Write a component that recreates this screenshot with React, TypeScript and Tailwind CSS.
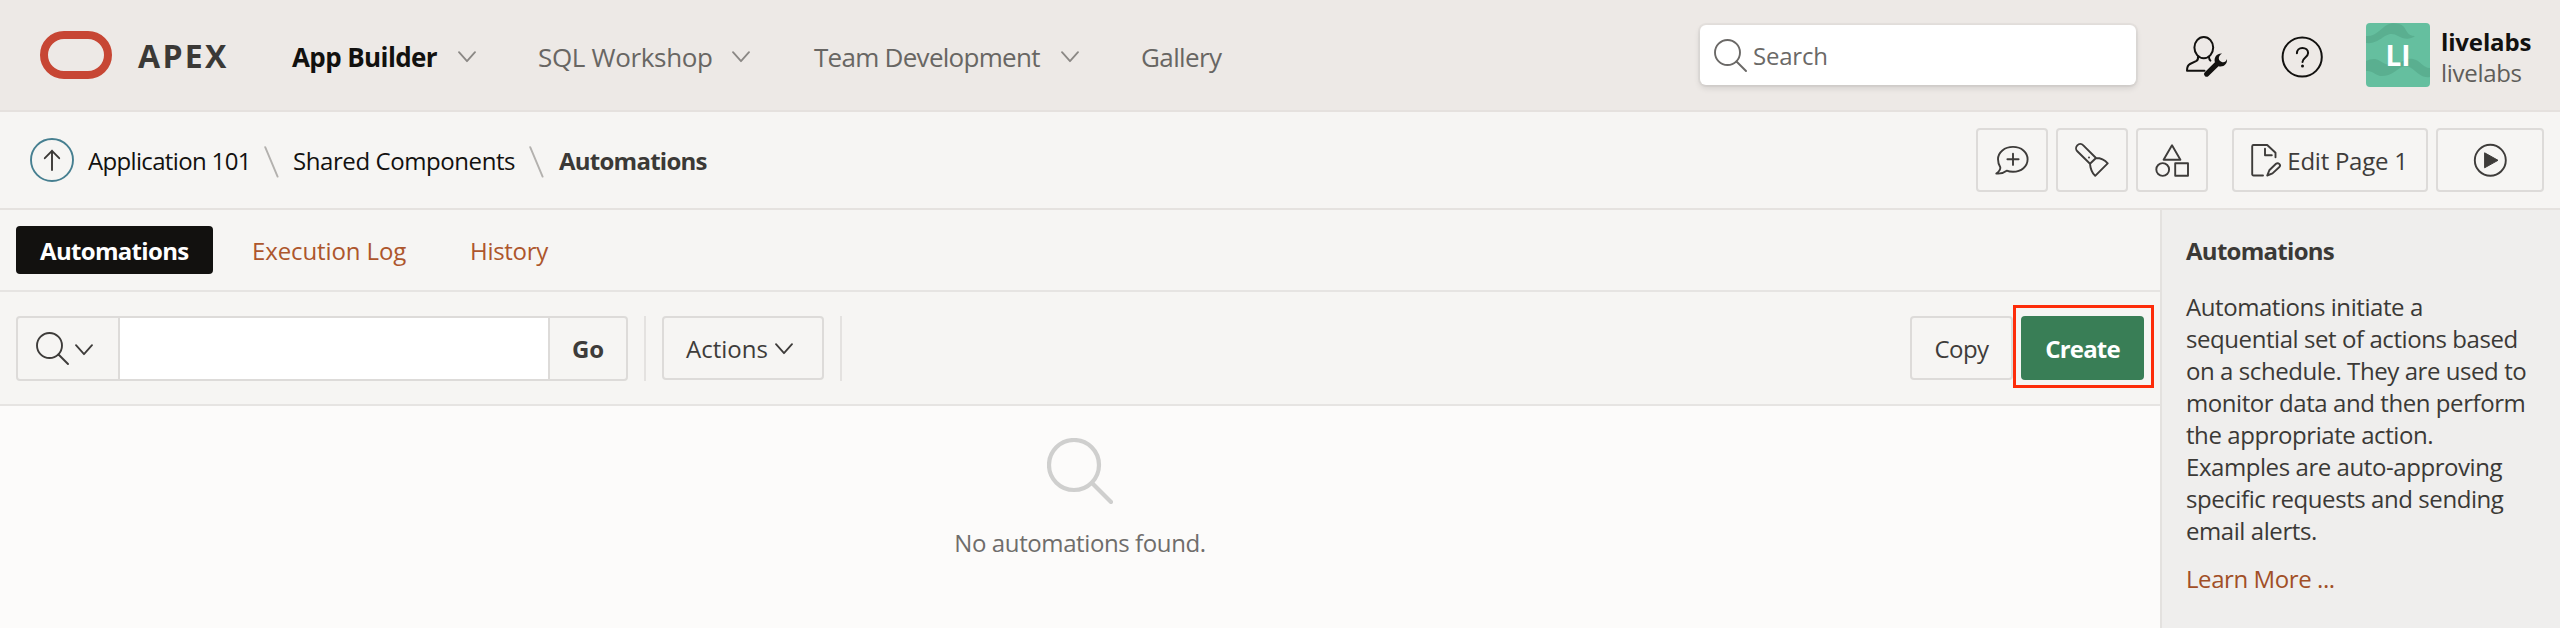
import type { ReactNode } from "react";

function Chevron({ className = "" }: { className?: string }) {
  return (
    <svg width="18" height="12" viewBox="0 0 18 12" fill="none" stroke="currentColor" className={`shrink-0 ${className}`}>
      <path d="M1 1.2 9 10.2l8-9" strokeWidth="1.8" strokeLinecap="round" strokeLinejoin="round" />
    </svg>
  );
}

function Magnifier({ className = "", stroke = 1.9 }: { className?: string; stroke?: number }) {
  return (
    <svg viewBox="0 0 33 33" fill="none" stroke="currentColor" strokeWidth={stroke} strokeLinecap="round" className={`shrink-0 ${className}`}>
      <circle cx="13.5" cy="13.5" r="12.5" />
      <path d="M22.5 22.5 32 32" />
    </svg>
  );
}

function IconButton({ children, className = "" }: { children: ReactNode; className?: string }) {
  return (
    <button className={`flex h-16 items-center justify-center rounded border-2 border-[#dddbd9] text-[#3e3c3a] ${className}`}>
      {children}
    </button>
  );
}

function Header() {
  return (
    <header className="flex h-28 items-center border-b-2 border-[#e5e1de] bg-[#ede9e6] pl-10">
      <div className="h-12 w-[72px] rounded-full border-8 border-[#c74634]" />
      <div className="ml-[26px] w-[154px] pt-px text-[32px] font-bold tracking-[2.3px] text-[#3b3936]">APEX</div>
      <nav className="flex items-center pt-1 text-[26px] whitespace-nowrap text-[#686663]">
        <a className="w-[166px] font-bold tracking-[-0.6px] text-[#12110f]">App Builder</a>
        <Chevron className="text-[#8b8885]" />
        <a className="ml-[62px] w-[194px] tracking-[-0.33px]">SQL Workshop</a>
        <Chevron className="text-[#8b8885]" />
        <a className="ml-16 w-[247px] tracking-[-0.72px]">Team Development</a>
        <Chevron className="text-[#8b8885]" />
        <a className="ml-[62px] tracking-[-0.6px]">Gallery</a>
      </nav>
      <div className="ml-auto flex h-[60px] w-[436px] items-center rounded-md bg-white pl-3.5 text-[#6b6967] shadow-[0_0_0_2px_rgba(0,0,0,0.03),0_3px_6px_rgba(0,0,0,0.12)]">
        <Magnifier className="size-[33px]" />
        <span className="ml-[6px] pt-px text-2xl tracking-[-0.2px]">Search</span>
      </div>
      <svg width="42" height="43" viewBox="0 0 42 43" fill="none" stroke="#12110f" strokeWidth="2" strokeLinecap="round" strokeLinejoin="round" className="mt-[3px] ml-[50px] shrink-0">
        <ellipse cx="17.8" cy="12.6" rx="9.4" ry="10.6" />
        <path d="M12 22c.2 2-.4 3.400-2 4.200L4 29C1.600 30.200 1 32.200 1 35.800h17.500M23 22.200c.1 1.500.5 2.500 1.400 3.400" />
        <path d="M36 18.600C31 18.200 27.600 22.400 28.900 27.200L18.800 37.200A2.600 2.600 0 0 0 22.500 40.900L32.500 31.200C37.400 32.600 41.600 29 41 24C40 26.600 38.300 27.700 36.300 27.200C34.200 26.700 32.900 25.400 32.800 23.600C32.700 21.600 34 19.800 36 18.600z" fill="#12110f" stroke="none" />
      </svg>
      <svg width="42" height="42" viewBox="0 0 42 42" fill="none" stroke="#12110f" strokeWidth="2" strokeLinecap="round" className="mt-1 ml-[53px] shrink-0">
        <circle cx="21.200" cy="21" r="19.600" />
        <path d="M15.900 17.300c0-3.300 2.300-5.400 5.500-5.400s5.700 2.200 5.700 5.100c0 4.400-5.600 4.500-5.600 9" />
        <circle cx="21.500" cy="30" r="1.500" fill="#12110f" stroke="none" />
      </svg>
      <div className="ml-[43px] grid size-16 shrink-0 place-items-center overflow-hidden rounded bg-[#65bf9f]">
        <svg width="64" height="64" viewBox="0 0 64 64" fill="#5aaf90" className="col-start-1 row-start-1">
          <path d="M0 13C10 14 15 5 21 2c4-2.500 12-2.500 16 1 4 4 4 10 12 10-5 4-12 3-17 0-4-2.500-8-3-13 0C13 17 8 21 0 20z" />
          <path d="M0 38c5-2 9-3 14 0 6 4 12 6 18 3 6-4 9-6 15-5 7 1 10 9 17 9v9c-6 1-10-2-15-6-5-5-10-6-15-3-6 4-10 8-18 8-6 0-10-6-16-5z" />
        </svg>
        <span className="col-start-1 row-start-1 text-[28px] font-bold text-white">LI</span>
      </div>
      <div className="ml-[11px] w-[119px] pt-1 text-2xl leading-[31px]">
        <div className="font-bold tracking-[-0.15px] text-[#12110f]">livelabs</div>
        <div className="tracking-[-0.3px] text-[#5f5d5a]">livelabs</div>
      </div>
    </header>
  );
}

function Slash() {
  return (
    <svg width="15" height="32" viewBox="0 0 15 32" stroke="#b3b1ae" strokeWidth="1.900" strokeLinecap="round" className="mt-1 shrink-0">
      <path d="M1.200 1.200 13.600 30.600" />
    </svg>
  );
}

function BreadcrumbBar() {
  return (
    <div className="flex h-[98px] items-center border-b-2 border-[#e5e2df] bg-[#f6f5f3] pr-4 pl-[30px] text-2xl whitespace-nowrap text-[#12110f]">
      <svg width="44" height="44" viewBox="0 0 44 44" fill="none" strokeLinecap="round" strokeLinejoin="round" className="shrink-0">
        <circle cx="22" cy="22" r="21" stroke="#467f90" strokeWidth="1.900" />
        <path d="M22 32V12.800M14.800 20.200 22 12.800l7.200 7.400" stroke="#3b3936" strokeWidth="1.900" />
      </svg>
      <a className="ml-3.5 w-[176px] pt-px tracking-[-0.66px]">Application 101</a>
      <Slash />
      <a className="ml-[14px] w-[236px] pt-px tracking-[-0.42px]">Shared Components</a>
      <Slash />
      <span className="ml-[15px] pt-px font-bold tracking-[-0.75px] text-[#3b3936]">Automations</span>
      <div className="ml-auto flex gap-2">
        <IconButton className="w-[72px]">
          <svg width="34" height="32" viewBox="0 0 34 32" fill="none" stroke="currentColor" strokeWidth="1.900" strokeLinecap="round" strokeLinejoin="round">
            <path d="M5.300 23.200C3.800 21 3 18.300 3 15.300 3 8.200 9.700 2.900 18 2.900s14.600 5.300 14.600 12.400S26.300 27.800 18 27.800c-2.300 0-4.300-.3-6.300-1.100C9 28.800 5 29.900 1.300 29.500 4 27.800 5.600 26 5.300 23.200zM12.400 15.300h11.200M18 9.700v11.200" />
          </svg>
        </IconButton>
        <IconButton className="w-[72px]">
          <svg width="34" height="34" viewBox="0 0 34 34" fill="none" stroke="currentColor" strokeWidth="1.900" strokeLinecap="round" strokeLinejoin="round">
            <path d="M15 20.800 2.300 8.300a4.100 4.100 0 0 1 6-6L21 15zM21 15c4.500 0 8 1 11.700 5.400L20.200 32.800C16.600 29.500 15.400 25.500 15 20.800" />
            <circle cx="14" cy="14.500" r="1" fill="currentColor" stroke="none" />
          </svg>
        </IconButton>
        <IconButton className="w-[72px]">
          <svg width="34" height="32" viewBox="0 0 34 32" fill="none" stroke="currentColor" strokeWidth="1.900" strokeLinejoin="round" className="overflow-visible">
            <path d="M17 1.200 8.600 15.700h16.800z" />
            <circle cx="7.700" cy="25.500" r="6.400" />
            <rect x="20.200" y="19.200" width="12.800" height="12.600" />
          </svg>
        </IconButton>
        <IconButton className="ml-4 w-[196px] pr-px">
          <svg width="30" height="32" viewBox="0 0 30 32" fill="none" stroke="currentColor" strokeWidth="1.900" strokeLinecap="round" strokeLinejoin="round" className="shrink-0 overflow-visible">
            <path d="M12 31.500H2.500a1.300 1.300 0 0 1-1.300-1.300v-28A1.300 1.300 0 0 1 2.500 1h13.700l8.300 7.800v4.500M14 4.700v6.600h6.800" />
            <path d="M16.200 31.500 18.300 26.300 25 19.800C27.200 18 30.300 20.800 28.400 23L21.500 29.400z" />
          </svg>
          <span className="ml-[6px] pt-px tracking-[-0.25px]">Edit Page 1</span>
        </IconButton>
        <IconButton className="w-[108px]">
          <svg width="34" height="34" viewBox="0 0 34 34" fill="none" stroke="currentColor" strokeWidth="1.900">
            <circle cx="17.300" cy="17.300" r="15.500" />
            <path d="M11.600 9.800v15L25 17.300z" fill="currentColor" strokeWidth="1" strokeLinejoin="round" />
          </svg>
        </IconButton>
      </div>
    </div>
  );
}

function Tabs() {
  return (
    <div className="flex h-[82px] items-center border-b-2 border-[#e6e4e2] bg-[#f6f5f3] pl-4 text-2xl whitespace-nowrap text-[#ad562c]">
      <a className="flex h-12 w-[197px] items-center rounded bg-[#12110f] pt-px pl-6 font-bold tracking-[-0.68px] text-white">Automations</a>
      <a className="ml-[39px] w-[218px] pt-px tracking-[-0.1px]">Execution Log</a>
      <a className="pt-px tracking-[-0.3px]">History</a>
    </div>
  );
}

function Toolbar() {
  return (
    <div className="flex h-[114px] items-start border-b-2 border-[#e6e4e2] bg-[#f6f5f3] pt-6 pr-4 pl-4 text-2xl text-[#3e3c3a]">
      <div className="flex h-[65px] w-[612px] rounded border-2 border-[#dddbd9]">
        <button className="flex w-[102px] items-center border-r-2 border-[#dddbd9] pl-[18px]">
          <Magnifier className="size-[33px]" />
          <Chevron className="mt-0.5 ml-[6px]" />
        </button>
        <div className="flex-1 bg-white" />
        <button className="w-[78px] border-l-2 border-[#dddbd9] text-center font-bold">Go</button>
      </div>
      <div className="ml-4 h-[65px] w-0.5 bg-[#e4e2e0]" />
      <button className="ml-4 flex h-16 w-[162px] items-center rounded border-2 border-[#dddbd9] pl-[22px]">
        <span className="w-[89px] pt-px text-left">Actions</span>
        <Chevron className="mt-0.5" />
      </button>
      <div className="ml-4 h-[65px] w-0.5 bg-[#e4e2e0]" />
      <button className="mr-2 ml-auto h-16 w-[103px] rounded border-2 border-[#dddbd9] pt-px text-center tracking-[-0.6px]">Copy</button>
      <div className="relative">
        <button className="h-16 w-[123px] rounded bg-[#397e56] pt-px text-center font-bold tracking-[-0.8px] text-white">Create</button>
        <div className="absolute -top-[11px] -left-2 h-[83px] w-[141px] border-[3px] border-[#fd2c09]" />
      </div>
    </div>
  );
}

function HelpPanel() {
  return (
    <aside className="w-[400px] border-l-2 border-[#e3e1df] bg-[#efeeed] pt-[25px] pl-6 text-2xl leading-8 whitespace-nowrap text-[#3b3936]">
      <h2 className="font-bold tracking-[-0.72px]">Automations</h2>
      <p className="mt-6 tracking-[-0.43px]">
        Automations initiate a<br />
        sequential set of actions based<br />
        on a schedule. They are used to<br />
        monitor data and then perform<br />
        the appropriate action.<br />
        Examples are auto-approving<br />
        specific requests and sending<br />
        email alerts.
      </p>
      <a className="mt-4 block tracking-[-0.42px] text-[#a14f27]">Learn More ...</a>
    </aside>
  );
}

export default function App() {
  return (
    <div className="flex h-[628px] w-[2560px] flex-col overflow-hidden bg-[#fcfbfa] font-['Open_Sans','Noto_Sans',sans-serif]">
      <Header />
      <BreadcrumbBar />
      <div className="flex flex-1">
        <main className="flex flex-1 flex-col">
          <Tabs />
          <Toolbar />
          <div className="flex flex-col items-center pt-8">
            <Magnifier className="size-[66px] text-[#cfcfce]" stroke={2.1} />
            <p className="mt-[23px] text-2xl tracking-[-0.4px] text-[#6f6d6b]">No automations found.</p>
          </div>
        </main>
        <HelpPanel />
      </div>
    </div>
  );
}
